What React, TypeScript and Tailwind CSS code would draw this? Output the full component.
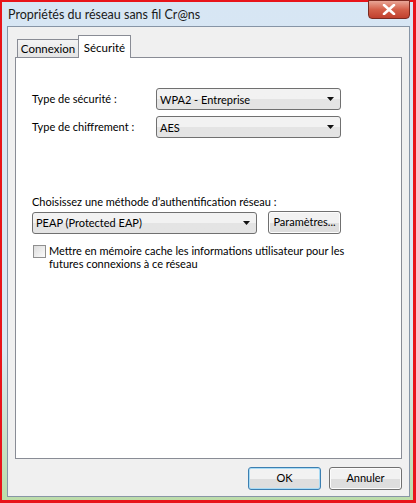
import React from 'react';

const font = { fontFamily: 'Lato, "Noto Sans", sans-serif' };

const Arrow: React.FC = () => (
  <svg width="7" height="4" viewBox="0 0 7 4" className="shrink-0">
    <path d="M0 0h7L3.5 4z" fill="#111" />
  </svg>
);

const Dropdown: React.FC<{ value: string; width: string }> = ({ value, width }) => (
  <div
    className={`${width} h-[22px] flex items-center justify-between pl-[3px] pr-[6px] rounded-[3px] border border-[#707070] bg-linear-to-b from-[#f2f2f2] from-50% to-[#e4e4e4] to-50%`}
  >
    <span className="text-[11px] text-black leading-none">{value}</span>
    <Arrow />
  </div>
);

const Button: React.FC<{ label: string; width: string; focused?: boolean }> = ({ label, width, focused }) => (
  <div
    className={`${width} h-[23px] flex items-center justify-center rounded-[3px] border ${
      focused ? 'border-[#3c7fb1] shadow-[inset_0_0_0_1px_#a8dbf5]' : 'border-[#707070] shadow-[inset_0_0_0_1px_#fcfcfc]'
    } bg-linear-to-b from-[#f2f2f2] from-50% to-[#dedede] to-50% text-[11px] text-black`}
  >
    {label}
  </div>
);

const App: React.FC = () => {
  return (
    <div style={font} className="w-[416px] h-[503px] bg-white">
      <div className="w-[416px] h-[503px] flex flex-col border-l-2 border-t-2 border-r-[3px] border-b-[3px] border-[#e8141a] bg-linear-to-b from-[#d7e6f4] via-[#dde9f3] via-70% to-[#bcdcaa]">
        {/* Title bar */}
        <div className="relative h-[24px] flex items-center pl-[6px] shrink-0">
          <span className="text-[12.5px] text-[#1a1a1a] pt-[2px]">Propriétés du réseau sans fil Cr@ns</span>
          <div className="absolute right-[3px] top-[-2px] w-[42px] h-[19px] rounded-b-[4px] border border-[#7a2a20] bg-linear-to-b from-[#e8a596] via-[#d4604a] to-[#c0402e] flex items-center justify-center">
            <svg width="14" height="11" viewBox="0 0 14 11">
              <path d="M2 1l10 9M12 1L2 10" stroke="#fff" strokeWidth="2.6" strokeLinecap="round" />
            </svg>
          </div>
        </div>

        {/* Client area */}
        <div className="flex-1 ml-[5px] mr-[3px] mb-[3px] border border-[#8795a6] bg-[#f0f0f0] flex flex-col px-[7px] pt-[7px]">
          {/* Tabs */}
          <div className="flex items-end pl-[2px] h-[23px] relative z-10">
            <div className="w-[62px] h-[18px] border border-[#898c95] border-b-0 bg-linear-to-b from-[#f3f3f3] to-[#e5e5e5] flex items-center justify-center text-[11.5px] text-black">
              Connexion
            </div>
            <div className="w-[53px] h-[23px] -ml-px border border-[#898c95] border-b-0 bg-white flex items-start justify-center pt-[3px] text-[11.5px] text-black mb-[-1px]">
              Sécurité
            </div>
          </div>

          {/* Panel */}
          <div className="h-[402px] border border-[#898c95] bg-white pl-[16px] pt-[30px] text-[11px] text-black">
            <div className="flex items-center h-[22px]">
              <span className="w-[124px]">Type de sécurité :</span>
              <Dropdown value="WPA2 - Entreprise" width="w-[185px]" />
            </div>
            <div className="flex items-center h-[22px] mt-[6px]">
              <span className="w-[124px]">Type de chiffrement :</span>
              <Dropdown value="AES" width="w-[185px]" />
            </div>

            <div className="mt-[56px] leading-[15px]">Choisissez une méthode d’authentification réseau :</div>
            <div className="flex items-center mt-[2px] gap-[11px]">
              <Dropdown value="PEAP (Protected EAP)" width="w-[225px]" />
              <Button label="Paramètres..." width="w-[73px]" />
            </div>

            <div className="flex items-start mt-[10px]">
              <div className="w-[13px] h-[13px] mt-[1px] ml-px border border-[#8f8f8f] bg-linear-to-br from-[#dcdcdc] to-[#fbfbfb] shrink-0" />
              <div className="ml-[3px] leading-[13px]">
                Mettre en mémoire cache les informations utilisateur pour les
                <br />
                futures connexions à ce réseau
              </div>
            </div>
          </div>

          {/* Footer buttons */}
          <div className="flex justify-end gap-[8px] mt-[8px]">
            <Button label="OK" width="w-[73px]" focused />
            <Button label="Annuler" width="w-[73px]" />
          </div>
        </div>
      </div>
    </div>
  );
};

export default App;
